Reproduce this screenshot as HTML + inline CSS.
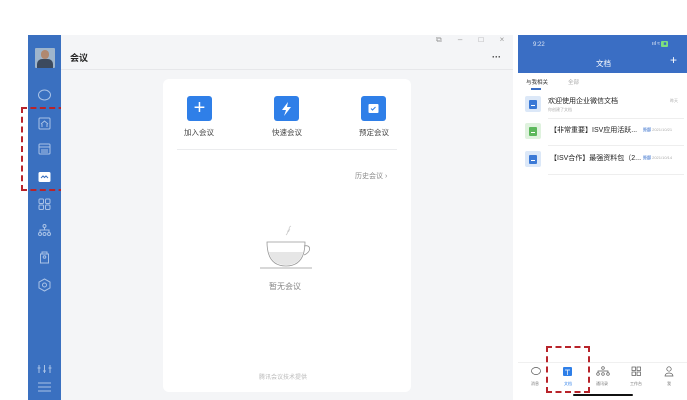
<!DOCTYPE html>
<html><head><meta charset="utf-8"><style>
*{margin:0;padding:0;box-sizing:border-box}
body{width:687px;height:400px;background:#fff;position:relative;overflow:hidden;font-family:"Liberation Sans","Noto Sans CJK SC",sans-serif}
.abs{position:absolute}
.side{left:28px;top:35px;width:33px;height:365px;background:#3a70c0}
.main{left:61px;top:35px;width:452px;height:365px;background:#f4f5f7}
.hdr{left:61px;top:35px;width:452px;height:35px;border-bottom:1px solid #e6e7ea;background:#f4f5f7}
.card{left:163px;top:79px;width:248px;height:313px;background:#fff;border-radius:6px}
.btn{width:25px;height:25px;background:#2f7fe8;border-radius:3px}
.lbl{font-size:7.5px;color:#444}
.phone{left:518px;top:35px;width:169px;height:365px;background:#fff}
.ptop{left:518px;top:35px;width:169px;height:38px;background:#3a6ec4}
.doc{width:16px;height:16px;border-radius:2px}
.tt{font-size:7px;color:#222}
.sm{font-size:4px;color:#aaa}
.dash{border:2px dashed #b8232a}
</style></head><body>
<div class="abs side"></div>
<div class="abs" style="left:35px;top:48px;width:20px;height:20px;background:#9fb5cc;border-radius:1px;overflow:hidden"><div class="abs" style="left:6px;top:2px;width:8px;height:9px;border-radius:4px;background:#b08870"></div><div class="abs" style="left:2px;top:11px;width:16px;height:10px;border-radius:5px 5px 0 0;background:#3c4a5e"></div></div>
<svg class="abs" style="left:28px;top:80px" width="33" height="320" fill="none" stroke="#a9c2e6" stroke-width="1">
<ellipse cx="16.5" cy="15" rx="6" ry="5"/>
<rect x="11" y="38" width="11" height="11" rx="1"/><path d="M13 44 l3.5-3 3.5 3 M14 47 v-3 M19 47 v-3"/>
<rect x="11" y="64" width="11" height="10" rx="1"/><path d="M11 67 h11 M13 70 h7 M13 72 h7"/>
<rect x="10.5" y="92" width="12" height="10" rx="1.5" fill="#fff" stroke="none"/><path d="M13 98 l2-2 1.5 1.5 1.5-1.5 2 2" stroke="#3a70c0"/>
<rect x="11" y="119" width="4.5" height="4.5" rx="1"/><rect x="17.5" y="119" width="4.5" height="4.5" rx="1"/><rect x="11" y="125" width="4.5" height="4.5" rx="1"/><rect x="17.5" y="125" width="4.5" height="4.5" rx="1"/>
<circle cx="16.5" cy="146" r="1.5"/><path d="M16.5 147.5 v2 M12 152 v-2 h9 v2"/><circle cx="12" cy="154" r="1.5"/><circle cx="16.5" cy="154" r="1.5"/><circle cx="21" cy="154" r="1.5"/>
<path d="M12.5 174 h8 v9 h-8 z M14 174 v-2 h5 v2"/><circle cx="16.5" cy="177" r="1.3"/>
<path d="M16.5 199 l5.5 3 v6 l-5.5 3 -5.5-3 v-6 z"/><circle cx="16.5" cy="205" r="2"/>
<path d="M11 285 v8 M16.5 285 v8 M22 285 v8 M9.5 288 h3 M15 291 h3 M20.5 288 h3"/>
<path d="M10 303 h13 M10 307 h13 M10 311 h13"/>
</svg>
<div class="abs dash" style="left:21px;top:107px;width:53px;height:84px"></div>
<div class="abs main"></div>
<div class="abs hdr"></div>
<div class="abs" style="left:70px;top:51px;font-size:9px;font-weight:bold;color:#222">会议</div>
<div class="abs" style="left:436px;top:35px;font-size:8px;color:#999;letter-spacing:7px">⧉ ‒ □ ×</div>
<div class="abs" style="left:492px;top:52px;font-size:9px;color:#333;font-weight:bold">···</div>
<div class="abs card"></div>
<div class="abs btn" style="left:187px;top:96px"></div>
<div class="abs" style="left:187px;top:96px;width:25px;height:25px;color:#fff;font-size:20px;line-height:24px;text-align:center">+</div>
<div class="abs btn" style="left:274px;top:96px"></div>
<svg class="abs" style="left:274px;top:96px" width="25" height="25"><path d="M14 6 L8 14 h4 l-2 6 7-9 h-4 z" fill="#fff"/></svg>
<div class="abs btn" style="left:361px;top:96px"></div>
<svg class="abs" style="left:361px;top:96px" width="25" height="25"><rect x="7.5" y="8" width="10" height="9" rx="1" fill="#fff"/><path d="M10 12.5 l1.5 1.5 3-3" stroke="#2f7fe8" fill="none"/></svg>
<div class="abs lbl" style="left:184px;top:127px">加入会议</div>
<div class="abs lbl" style="left:272px;top:127px">快速会议</div>
<div class="abs lbl" style="left:359px;top:127px">预定会议</div>
<div class="abs" style="left:177px;top:149px;width:220px;height:1px;background:#ebecee"></div>
<div class="abs" style="left:355px;top:171px;font-size:7px;color:#888">历史会议 ›</div>
<svg class="abs" style="left:255px;top:225px" width="70" height="45" fill="none" stroke="#999" stroke-width="0.8">
<path d="M33 7 c3-2 -1-4 3-6 M31 10 c3-2 0-4 4-6" stroke="#ccc"/>
<path d="M12 17 h38 c0 18 -8 24 -19 24 c-11 0 -19-6 -19-24 z" fill="#fff"/>
<path d="M14 27 h34 c-2 9 -8 13 -17 13 c-9 0 -15-4 -17-13 z" fill="#e6e6e6" stroke="none"/>
<path d="M49 21 c7-2 8 6 0 9"/>
<path d="M5 43 h52"/>
</svg>
<div class="abs" style="left:269px;top:281px;font-size:8px;color:#888">暂无会议</div>
<div class="abs" style="left:259px;top:372px;font-size:6px;color:#bbb">腾讯会议技术提供</div>
<div class="abs phone"></div>
<div class="abs ptop"></div>
<div class="abs" style="left:533px;top:42px;font-size:6px;color:#dde6f5">9:22</div>
<div class="abs" style="left:652px;top:41px;font-size:5px;color:#fff">ııl ≈ <span style="background:#7ee07e;color:#3a6ec4;padding:0 2px;border-radius:1px">■</span></div>
<div class="abs" style="left:596px;top:58px;font-size:7.5px;color:#fff">文档</div>
<div class="abs" style="left:670px;top:53px;font-size:12px;color:#fff">+</div>
<div class="abs" style="left:526px;top:78px;font-size:5.5px;color:#333">与我相关</div>
<div class="abs" style="left:568px;top:78px;font-size:5.5px;color:#aaa">全部</div>
<div class="abs" style="left:531px;top:88px;width:10px;height:1.5px;background:#3a6ec4"></div>
<div class="abs doc" style="left:525px;top:96px;background:#dce8f8"></div><div class="abs" style="left:529px;top:100px;width:8px;height:9px;background:#3b79d6;border-radius:1px"></div><div class="abs" style="left:531px;top:105px;width:4px;height:1px;background:#fff"></div>
<div class="abs tt" style="left:548px;top:96px">欢迎使用企业微信文档</div>
<div class="abs sm" style="left:548px;top:107px">你创建了文档</div>
<div class="abs sm" style="left:670px;top:98px">昨天</div>
<div class="abs" style="left:548px;top:118px;width:136px;height:1px;background:#eee"></div>
<div class="abs doc" style="left:525px;top:123px;background:#dff2de"></div><div class="abs" style="left:529px;top:127px;width:8px;height:9px;background:#5cb85c;border-radius:1px"></div><div class="abs" style="left:531px;top:132px;width:4px;height:1px;background:#fff"></div>
<div class="abs tt" style="left:550px;top:125px">【非常重要】ISV应用活跃...</div>
<div class="abs sm" style="left:643px;top:127px"><span style="background:#dde8fa;color:#3a6ec4">外部</span> 2021/10/21</div>
<div class="abs" style="left:548px;top:145px;width:136px;height:1px;background:#eee"></div>
<div class="abs doc" style="left:525px;top:151px;background:#dce8f8"></div><div class="abs" style="left:529px;top:155px;width:8px;height:9px;background:#3b79d6;border-radius:1px"></div><div class="abs" style="left:531px;top:160px;width:4px;height:1px;background:#fff"></div>
<div class="abs tt" style="left:550px;top:153px">【ISV合作】最强资料包（2...</div>
<div class="abs sm" style="left:643px;top:155px"><span style="background:#dde8fa;color:#3a6ec4">外部</span> 2021/10/14</div>
<div class="abs" style="left:548px;top:174px;width:136px;height:1px;background:#eee"></div>
<div class="abs" style="left:518px;top:362px;width:169px;height:1px;background:#f0f0f0"></div>
<svg class="abs" style="left:518px;top:364px" width="169" height="20" fill="none" stroke="#555" stroke-width="0.7">
<ellipse cx="18" cy="7" rx="4.5" ry="3.5"/>
<rect x="45" y="3" width="9" height="9" rx="1" fill="#2f7fe8" stroke="none"/><path d="M47 6 h5 M49.5 6 v5" stroke="#fff"/>
<circle cx="85" cy="4" r="1.3"/><path d="M80 9 v-2 h10 v2"/><circle cx="80" cy="10" r="1.3"/><circle cx="85" cy="10" r="1.3"/><circle cx="90" cy="10" r="1.3"/>
<rect x="114" y="3" width="3.5" height="3.5"/><rect x="119" y="3" width="3.5" height="3.5"/><rect x="114" y="8" width="3.5" height="3.5"/><rect x="119" y="8" width="3.5" height="3.5"/>
<circle cx="151" cy="5" r="2.2"/><path d="M147 12 c0-4 8-4 8 0 z"/>
</svg>
<div class="abs sm" style="left:531px;top:381px;color:#777">消息</div>
<div class="abs sm" style="left:564px;top:381px;color:#2f7fe8">文档</div>
<div class="abs sm" style="left:596px;top:381px;color:#777">通讯录</div>
<div class="abs sm" style="left:630px;top:381px;color:#777">工作台</div>
<div class="abs sm" style="left:667px;top:381px;color:#777">我</div>
<div class="abs dash" style="left:546px;top:346px;width:44px;height:47px"></div>
<div class="abs" style="left:573px;top:394px;width:60px;height:2px;background:#111;border-radius:1px"></div>
</body></html>
